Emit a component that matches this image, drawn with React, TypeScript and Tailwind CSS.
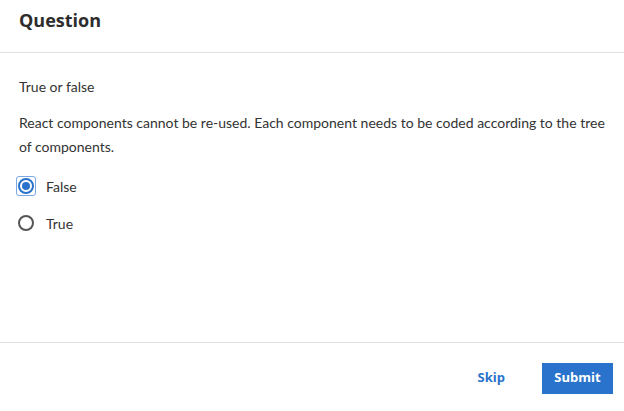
export default function App() {
  return (
    <div className="flex h-[411px] w-[624px] flex-col bg-white text-[#333]" style={{ fontFamily: 'Lato, "Open Sans", sans-serif' }}>
      <div className="flex h-[53px] shrink-0 items-center border-b border-[#e1e1e1] px-[19px] pb-[12px]">
        <h1 className="text-[18px] font-bold text-[#2d2d2d]" style={{ fontFamily: '"Open Sans", sans-serif' }}>Question</h1>
      </div>

      <div className="flex flex-1 flex-col px-[19px] pt-[24px] text-[14px]">
        <p className="leading-[20px]">True or false</p>
        <p className="mt-[14px] leading-[24px]">
          React components cannot be re-used. Each component needs to be coded according to the tree of components.
        </p>
        <div className="mt-[17px] flex flex-col gap-[17px]">
          <label className="-ml-[3px] flex h-[20px] items-center gap-[10px]">
            <span className="flex h-[20px] w-[20px] items-center justify-center rounded-[3px] border border-[#7aa9e6]">
              <span className="flex h-[16px] w-[16px] items-center justify-center rounded-full border-2 border-[#2a73cc]">
                <span className="h-[8px] w-[8px] rounded-full bg-[#2a73cc]" />
              </span>
            </span>
            <span>False</span>
          </label>
          <label className="-ml-[3px] flex h-[20px] items-center gap-[10px]">
            <span className="flex h-[20px] w-[20px] items-center justify-center">
              <span className="h-[16px] w-[16px] rounded-full border-2 border-[#555]" />
            </span>
            <span>True</span>
          </label>
        </div>
      </div>

      <div className="flex h-[69px] shrink-0 items-center justify-end gap-[37px] border-t border-[#e1e1e1] pr-[11px] pt-[2px]">
        <button className="text-[13px] font-bold text-[#2a73cc]" style={{ fontFamily: '"Open Sans", sans-serif' }}>Skip</button>
        <button className="h-[31px] w-[71px] bg-[#2a73cc] text-[13px] font-bold text-white" style={{ fontFamily: '"Open Sans", sans-serif' }}>Submit</button>
      </div>
    </div>
  )
}
